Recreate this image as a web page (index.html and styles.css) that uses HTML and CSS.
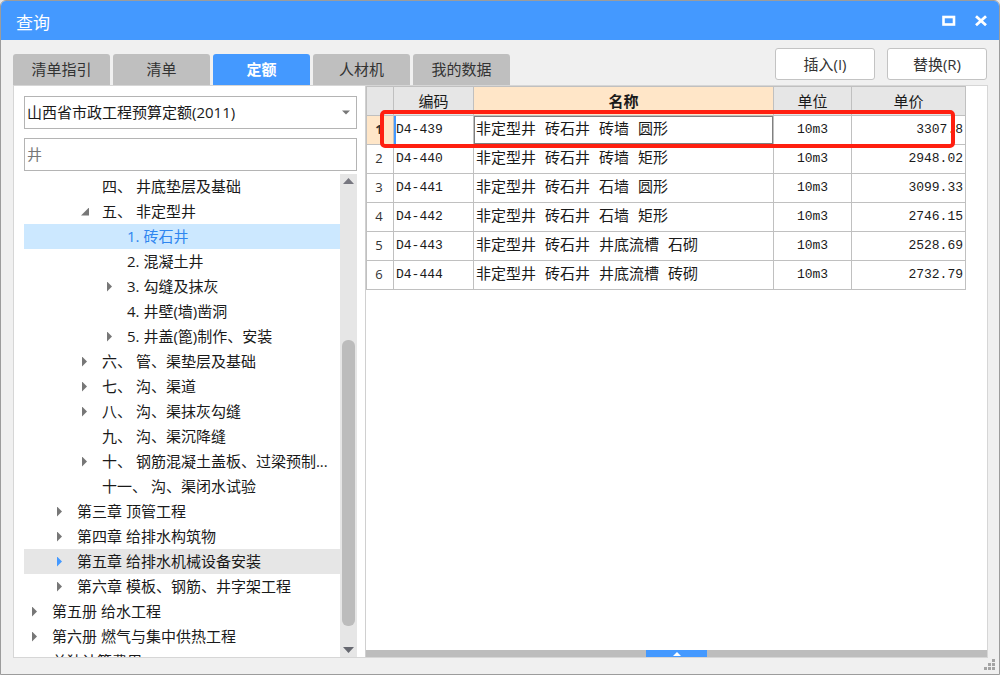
FILE: index.html
```html
<!DOCTYPE html>
<html lang="zh-CN">
<head>
<meta charset="utf-8">
<title>查询</title>
<link rel="stylesheet" href="styles.css">
</head>
<body>
<div class="window">
  <header class="titlebar">
    <h1 class="title">查询</h1>
    <button class="win-btn" aria-label="最大化"><svg width="14" height="12" viewBox="0 0 14 12"><rect x="1.5" y="2" width="10.5" height="7.5" fill="none" stroke="#fff" stroke-width="2.6"/></svg></button>
    <button class="win-btn" aria-label="关闭"><svg width="14" height="12" viewBox="0 0 14 12"><path d="M2 1.2L12 10.2M12 1.2L2 10.2" fill="none" stroke="#fff" stroke-width="2.8"/></svg></button>
  </header>

  <div class="toolbar">
    <nav class="tabs">
      <button class="tab">清单指引</button>
      <button class="tab">清单</button>
      <button class="tab tab-active">定额</button>
      <button class="tab">人材机</button>
      <button class="tab">我的数据</button>
    </nav>
    <div class="actions">
      <button class="action">插入(I)</button>
      <button class="action">替换(R)</button>
    </div>
  </div>

  <main class="panel">
    <section class="side">
      <div class="select-wrap">
        <select class="field" aria-label="定额库"><option>山西省市政工程预算定额(2011)</option></select>
        <svg class="caret" width="8" height="5" viewBox="0 0 8 5"><path d="M0 0.5H8L4 4.5Z" fill="#777"/></svg>
      </div>
      <input class="field search" type="text" value="井" aria-label="搜索">
      <div class="tree-wrap">
        <ul class="tree" role="tree">
          <li class="node l3" role="treeitem">四、 井底垫层及基础</li>
          <li class="node l3 expanded" role="treeitem">五、 非定型井</li>
          <li class="node l4 selected" role="treeitem">1. 砖石井</li>
          <li class="node l4" role="treeitem">2. 混凝土井</li>
          <li class="node l4 collapsed" role="treeitem">3. 勾缝及抹灰</li>
          <li class="node l4" role="treeitem">4. 井壁(墙)凿洞</li>
          <li class="node l4 collapsed" role="treeitem">5. 井盖(篦)制作、安装</li>
          <li class="node l3 collapsed" role="treeitem">六、 管、渠垫层及基础</li>
          <li class="node l3 collapsed" role="treeitem">七、 沟、渠道</li>
          <li class="node l3 collapsed" role="treeitem">八、 沟、渠抹灰勾缝</li>
          <li class="node l3" role="treeitem">九、 沟、渠沉降缝</li>
          <li class="node l3 collapsed" role="treeitem">十、 钢筋混凝土盖板、过梁预制...</li>
          <li class="node l3" role="treeitem">十一、 沟、渠闭水试验</li>
          <li class="node l2 collapsed" role="treeitem">第三章 顶管工程</li>
          <li class="node l2 collapsed" role="treeitem">第四章 给排水构筑物</li>
          <li class="node l2 collapsed hovered" role="treeitem">第五章 给排水机械设备安装</li>
          <li class="node l2 collapsed" role="treeitem">第六章 模板、钢筋、井字架工程</li>
          <li class="node l1 collapsed" role="treeitem">第五册 给水工程</li>
          <li class="node l1 collapsed" role="treeitem">第六册 燃气与集中供热工程</li>
          <li class="node l1 collapsed" role="treeitem">单独计算费用</li>
        </ul>
        <div class="scrollbar">
          <svg width="11" height="6" viewBox="0 0 11 6"><path d="M0 6L5.5 0L11 6Z" fill="#777780"/></svg>
          <div class="track"><div class="thumb"></div></div>
          <svg width="11" height="6" viewBox="0 0 11 6"><path d="M0 0L5.5 6L11 0Z" fill="#666870"/></svg>
        </div>
      </div>
    </section>

    <section class="content">
      <div class="grid-wrap">
        <table class="grid">
          <colgroup><col class="c-no"><col class="c-code"><col><col class="c-unit"><col class="c-price"></colgroup>
          <thead>
            <tr><th></th><th>编码</th><th class="current">名称</th><th>单位</th><th>单价</th></tr>
          </thead>
          <tbody>
            <tr class="active"><th>1</th><td class="code">D4-439</td><td class="name">非定型井 砖石井 砖墙 圆形</td><td class="unit">10m3</td><td class="price">3307.8</td></tr>
            <tr><th>2</th><td class="code">D4-440</td><td class="name">非定型井 砖石井 砖墙 矩形</td><td class="unit">10m3</td><td class="price">2948.02</td></tr>
            <tr><th>3</th><td class="code">D4-441</td><td class="name">非定型井 砖石井 石墙 圆形</td><td class="unit">10m3</td><td class="price">3099.33</td></tr>
            <tr><th>4</th><td class="code">D4-442</td><td class="name">非定型井 砖石井 石墙 矩形</td><td class="unit">10m3</td><td class="price">2746.15</td></tr>
            <tr><th>5</th><td class="code">D4-443</td><td class="name">非定型井 砖石井 井底流槽 石砌</td><td class="unit">10m3</td><td class="price">2528.69</td></tr>
            <tr><th>6</th><td class="code">D4-444</td><td class="name">非定型井 砖石井 井底流槽 砖砌</td><td class="unit">10m3</td><td class="price">2732.79</td></tr>
          </tbody>
        </table>
        <div class="highlight"></div>
      </div>
      <div class="splitter">
        <button class="splitter-btn" aria-label="展开"><svg width="8" height="4" viewBox="0 0 8 4"><path d="M0 4L4 0L8 4Z" fill="#fff"/></svg></button>
      </div>
    </section>
  </main>
  <footer class="status">
    <svg width="12" height="12" viewBox="0 0 12 12" fill="#a4a4a4"><path d="M8 0h3v3h-3zM4 4h3v3h-3zM8 4h3v3h-3zM0 8h3v3h-3zM4 8h3v3h-3zM8 8h3v3h-3z"/></svg>
  </footer>
</div>
</body>
</html>
```
FILE: styles.css
```css
* { box-sizing: border-box; }

body {
  margin: 0;
  background: #e8e8e8;
  font: 15px/24px "Open Sans", "Noto Sans CJK SC", sans-serif;
  color: #1a1a1a;
}

button, input, select { font: inherit; color: inherit; margin: 0; }

.window {
  display: flex;
  flex-direction: column;
  height: 100vh;
  border: 1px solid #9c9c9c;
  border-radius: 6px 6px 0 0;
  background: #f0f0f0;
  overflow: hidden;
}

.titlebar {
  display: flex;
  align-items: center;
  gap: 18px;
  height: 39px;
  flex: none;
  padding: 0 11px 0 15px;
  background: #4499ff;
  color: #fff;
}

.title { flex: 1; margin: 0; padding-top: 4px; font-size: 17px; font-weight: 400; }
.win-btn { display: flex; padding: 0; border: 0; background: none; }

.toolbar {
  display: flex;
  justify-content: space-between;
  flex: none;
  height: 45px;
  padding: 0 12px;
}

.tabs { display: flex; align-items: flex-end; gap: 3px; }

.tab {
  width: 97px;
  height: 31px;
  padding: 0 0 2px;
  border: 0;
  border-radius: 3px 3px 0 0;
  background: #bfbfbf;
  color: #333;
}

.tab-active { background: #4499ff; color: #fff; font-weight: 700; }

.actions { display: flex; gap: 12px; padding-top: 8px; }

.action {
  width: 100px;
  height: 32px;
  padding: 0;
  border: 1px solid #c3c3c3;
  border-radius: 3px;
  background: #fff;
  color: #333;
}

.panel {
  display: flex;
  flex: 1;
  min-height: 0;
  margin: 0 11px 0 12px;
  border: 1px solid #d6d6d6;
  background: #fff;
}

.side {
  display: flex;
  flex-direction: column;
  flex: none;
  width: 351px;
  padding: 10px 8px 0 10px;
}

.field {
  display: block;
  width: 100%;
  height: 33px;
  padding: 0 2px 2px;
  border: 1px solid #b4b4b4;
  border-radius: 0;
  background: #fff;
  appearance: none;
}

.select-wrap { position: relative; }
.caret { position: absolute; right: 7px; top: 14px; }
.search { margin-top: 9px; color: #777; }

.tree-wrap { display: flex; flex: 1; min-height: 0; margin-top: 3px; }

.tree {
  flex: 1;
  min-width: 0;
  margin: 0;
  padding: 0;
  list-style: none;
  overflow: hidden;
}

.node {
  display: flex;
  align-items: center;
  height: 25px;
  padding-bottom: 2px;
  white-space: pre;
}

.node::before { content: ""; width: 12px; margin: 2px 12px 0 0; flex: none; }
.l1 { padding-left: 4px; }
.l2 { padding-left: 29px; }
.l3 { padding-left: 54px; }
.l4 { padding-left: 79px; }

.collapsed::before {
  height: 10px;
  background: #777;
  clip-path: polygon(4px 0, 9px 5px, 4px 10px);
}

.expanded::before {
  height: 8px;
  background: #777;
  clip-path: polygon(11px 0, 11px 8px, 3px 8px);
}

.selected { background: #cce8ff; color: #2f86f0; }
.hovered { background: #e6e6e6; }
.hovered::before { background: #4499ff; }

.scrollbar {
  display: flex;
  flex-direction: column;
  align-items: center;
  flex: none;
  width: 17px;
  padding: 4px 0;
  background: #e6e6e6;
}

.track { flex: 1; width: 13px; display: grid; grid-template-rows: 156fr 286fr 21fr; }
.thumb { grid-row: 2; border-radius: 6px; background: #bcbcbc; }

.content {
  display: flex;
  flex-direction: column;
  justify-content: space-between;
  flex: 1;
  min-width: 0;
  border-left: 1px solid #d0d0d0;
}

.grid-wrap { position: relative; margin-right: 21px; }

.grid {
  width: 100%;
  table-layout: fixed;
  border-collapse: collapse;
}

.c-no { width: 27px; }
.c-code { width: 80px; }
.c-unit { width: 78px; }
.c-price { width: 114px; }

.grid th, .grid td {
  height: 29px;
  padding: 0 2px;
  border: 1px solid #c0c0c0;
  line-height: 24px;
  white-space: pre;
  overflow: hidden;
}

.grid thead th { background: #e6e6e6; font-weight: 400; }
.grid thead .current { background: #ffe6c8; font-weight: 700; }
.grid tbody th { padding: 0 2px 2px 0; font-size: 13px; font-weight: 400; color: #333; }
.grid tbody .active th { background: #ffe6c8; font-weight: 700; }
.grid td { font-family: "Liberation Mono", "Noto Sans CJK SC", monospace; text-align: left; }
.grid .code, .grid .unit, .grid .price { font-size: 13px; }
.grid .name { padding-top: 2px; }
.grid .unit { text-align: center; }
.grid .price { text-align: right; }
.active .code { box-shadow: inset 2px 0 #4499ff; }
.active .name { box-shadow: inset 1px 1px #808080, inset -1px -1px #808080; }

.highlight {
  position: absolute;
  top: 24px;
  right: 11px;
  left: 14px;
  height: 38px;
  border: 4px solid #ff1f10;
  border-radius: 5px;
  pointer-events: none;
}

.splitter { display: flex; justify-content: center; height: 7px; background: #bdbdbd; }

.splitter-btn {
  display: flex;
  align-items: center;
  justify-content: center;
  width: 61px;
  padding: 0;
  border: 0;
  background: #4499ff;
}

.status { display: flex; justify-content: flex-end; flex: none; height: 16px; padding: 1px 3px; }
```
